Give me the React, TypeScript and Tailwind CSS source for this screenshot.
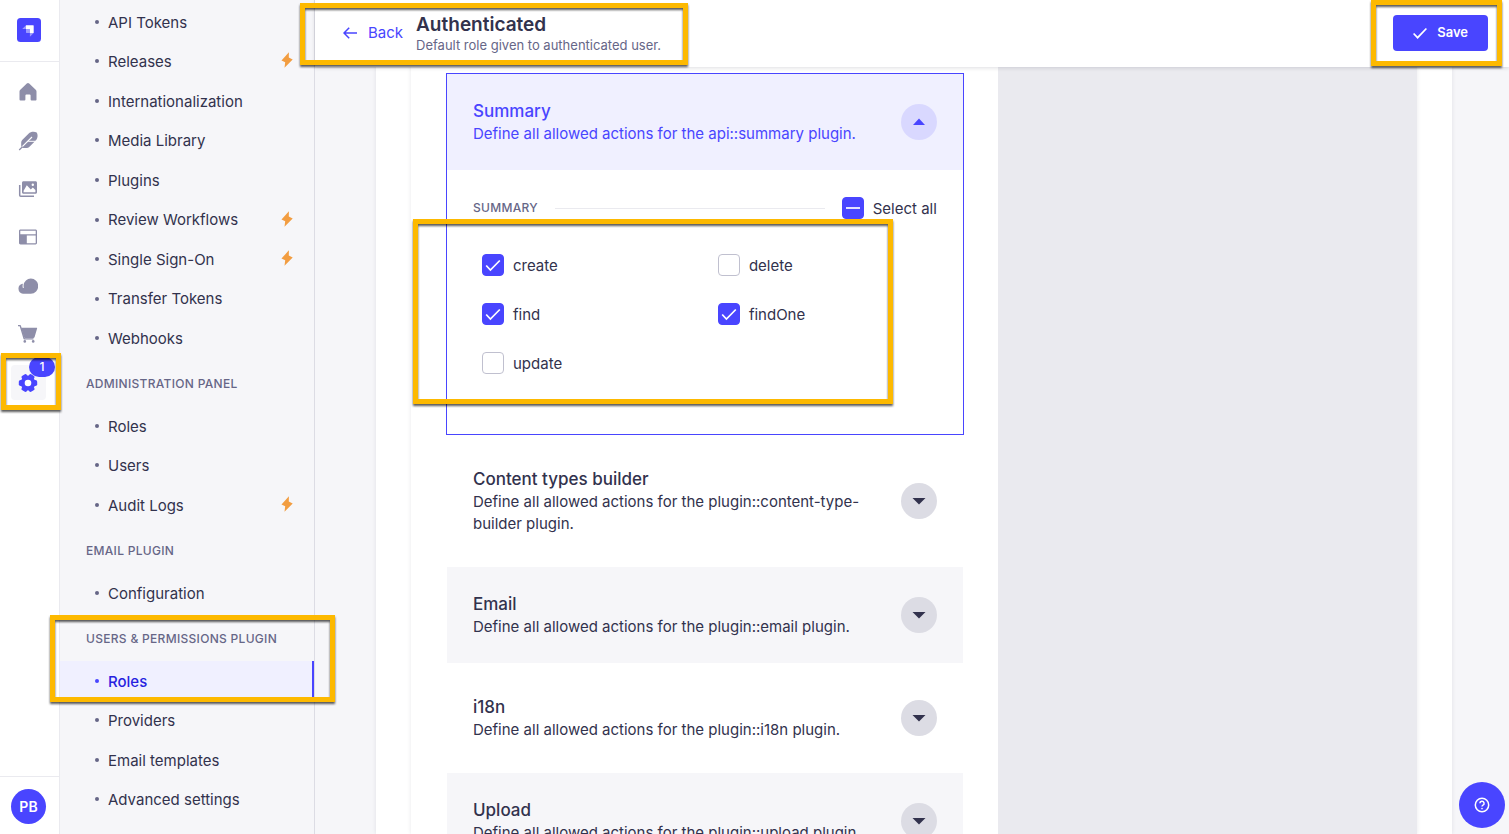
import React, { useState } from "react";

type NavEntry = { label: string; paid?: boolean; active?: boolean };

const globalLinks: NavEntry[] = [
  { label: "API Tokens" },
  { label: "Releases", paid: true },
  { label: "Internationalization" },
  { label: "Media Library" },
  { label: "Plugins" },
  { label: "Review Workflows", paid: true },
  { label: "Single Sign-On", paid: true },
  { label: "Transfer Tokens" },
  { label: "Webhooks" },
];
const adminLinks: NavEntry[] = [
  { label: "Roles" },
  { label: "Users" },
  { label: "Audit Logs", paid: true },
];
const emailLinks: NavEntry[] = [{ label: "Configuration" }];
const permissionLinks: NavEntry[] = [
  { label: "Roles", active: true },
  { label: "Providers" },
  { label: "Email templates" },
  { label: "Advanced settings" },
];

function Bolt() {
  return (
    <svg viewBox="0 0 12 16" className="mb-0.5 h-4 w-3" fill="#f29d41" aria-hidden="true">
      <path d="M7.9 0.2 0.5 8.6 4.2 10.2 3.5 15.8 11.7 7.4 7.8 5.6z" />
    </svg>
  );
}

function LinkList({ items, height }: { items: NavEntry[]; height: string }) {
  return (
    <ul className={`grid auto-rows-fr ${height}`}>
      {items.map((item) => (
        <li key={item.label} className="flex">
          <a
            href="#"
            aria-current={item.active ? "page" : undefined}
            className={
              item.active
                ? "flex flex-1 items-center border-r-2 border-[#4945ff] bg-[#f0f0ff] pr-[19px] pl-[35px] text-[15px] font-medium text-[#271fe0]"
                : "flex flex-1 items-center pr-[21px] pl-[35px] text-[15px] text-[#32324d]"
            }
          >
            <span
              className={
                item.active
                  ? "mr-[9px] size-1 rounded-full bg-[#4945ff]"
                  : "mr-[9px] size-1 rounded-full bg-[#666687]"
              }
            />
            <span className="flex-1 pt-0.5">{item.label}</span>
            {item.paid && <Bolt />}
          </a>
        </li>
      ))}
    </ul>
  );
}

function SectionTitle({ children }: { children: React.ReactNode }) {
  return (
    <h2 className="flex h-12 items-center pt-1 pl-[26px] text-xs font-medium tracking-wide text-[#666687] uppercase">
      {children}
    </h2>
  );
}

const railIcons: { label: string; drawing: React.ReactNode }[] = [
  {
    label: "Home",
    drawing: (
      <path d="M8.8 1.6a1.7 1.7 0 0 1 2.4 0l6.5 6.1c.5.5.8 1 .8 1.7v8.1c0 .6-.4 1-1 1h-3.9a1 1 0 0 1-1-1v-3.9a1 1 0 0 0-1-1H8.4a1 1 0 0 0-1 1v3.9a1 1 0 0 1-1 1H2.5a1 1 0 0 1-1-1V9.4c0-.7.3-1.2.8-1.7z" />
    ),
  },
  {
    label: "Content Manager",
    drawing: (
      <>
        <path d="M3.2 15.7v-4.2c0-1 .3-1.800 1-2.500L10.500 2.700c2.300-2.300 6-2.500 8.200-1.100 1.500 2.200 1.100 5.900-1.200 8.200l-6.300 6.200c-.7.7-1.500 1-2.500 1H4.500z" />
        <path d="M3.300 16.700 14 6" stroke="#fff" strokeWidth="1.100" fill="none" />
        <path d="M10.200 10.300h7.800" stroke="#fff" strokeWidth="1" fill="none" />
        <path d="M1.200 19 4.600 15.600" stroke="#8e8ea9" strokeWidth="1.300" fill="none" />
      </>
    ),
  },
  {
    label: "Media Library",
    drawing: (
      <>
        <path d="M1.7 6v10.200c0 .6.4 1 1 1h13.300" fill="none" stroke="#8e8ea9" strokeWidth="1.5" />
        <path
          fillRule="evenodd"
          d="M5.5 2.200h12c.9 0 1.500.6 1.500 1.500v9.600c0 .9-.6 1.500-1.500 1.500h-12c-.9 0-1.500-.6-1.500-1.500V3.700c0-.9.6-1.500 1.500-1.500zm9.300 2.300a1.200 1.200 0 1 0 0 2.400 1.200 1.200 0 0 0 0-2.400zM5.600 11.700v1.500h11.800v-2.100l-2.600-2.600-2 2-4-4.300z"
        />
      </>
    ),
  },
  {
    label: "Content-Type Builder",
    drawing: (
      <path
        fillRule="evenodd"
        d="M2.5 2.500h15c.8 0 1.500.6 1.500 1.400v12.200c0 .8-.7 1.400-1.500 1.400h-15c-.8 0-1.500-.6-1.500-1.400V3.900c0-.8.7-1.400 1.500-1.400zM2.300 3.800v3.400h15.400V3.800zM8.800 8.500v7.700h8.900V8.500z"
      />
    ),
  },
  {
    label: "Cloud",
    drawing: (
      <path d="M12.8 2.500a7.300 7.300 0 0 0-7.200 6.600c-.1 1.200 0 1.800.2 2.500.1.400-.8.700-1 .2-.3-1.200-.3-2.200 0-3.400.1-.4-.1-.7-.5-.6A5.100 5.100 0 0 0 5 17.800h7.800a7.600 7.600 0 0 0 7.400-7.700 7.500 7.500 0 0 0-7.400-7.600z" />
    ),
  },
  {
    label: "Marketplace",
    drawing: (
      <>
        <path d="M0 1.600h2.200l4 13.300h9.300" fill="none" stroke="#8e8ea9" strokeWidth="1.4" strokeLinejoin="round" />
        <path d="M3 3.700h15.500c.5 0 .8.400.6.900L16.600 13c-.2.600-.7 1-1.300 1H7.200c-.6 0-1.100-.4-1.300-1z" />
        <circle cx="6.8" cy="17.4" r="1.3" />
        <circle cx="15.2" cy="17.4" r="1.3" />
      </>
    ),
  },
];

function IconRail() {
  return (
    <nav aria-label="Main" className="flex w-[60px] shrink-0 flex-col border-r border-[#eaeaef] bg-white">
      <div className="flex h-[62px] shrink-0 items-center border-b border-[#eaeaef] pb-0.5 pl-[17px]">
        <svg viewBox="0 0 24 24" className="size-6" role="img" aria-label="Strapi">
          <rect width="24" height="24" rx="3.5" fill="#4945ff" />
          <path d="M9 7.300h7.200c.3 0 .5.200.5.500V15h-3.800v-3.400c0-.3-.2-.5-.5-.5H9z" fill="#fff" />
          <path d="M9 7.300v3.800H5.200zM12.900 15h3.800l-3.800 3.800z" fill="#fff" opacity=".45" />
          <path d="M9 11.100h3.400c.3 0 .5.200.5.500V15H9.500c-.3 0-.5-.2-.5-.5z" fill="#fff" opacity=".45" />
        </svg>
      </div>
      <ul className="flex h-[339px] shrink-0 flex-col">
        {railIcons.map((icon) => (
          <li key={icon.label} className="flex flex-1 items-center justify-center pt-3 pr-1">
            <a href="#" aria-label={icon.label}>
              <svg viewBox="0 0 20 20" className="size-5" fill="#8e8ea9" aria-hidden="true">
                {icon.drawing}
              </svg>
            </a>
          </li>
        ))}
        <li className="flex flex-1 items-center justify-center pt-3 pr-0.5">
          <a
            href="#"
            aria-label="Settings"
            className="relative flex size-[35px] items-center justify-center rounded bg-[#f6f6f9] pr-0.5"
          >
            <svg viewBox="0 0 20 20" className="size-5" aria-hidden="true">
              <g fill="#4945ff">
                <circle cx="10" cy="10" r="7.4" />
                <rect x="7" y="0.8" width="6" height="18.4" rx="1.8" transform="rotate(30 10 10)" />
                <rect x="7" y="0.8" width="6" height="18.4" rx="1.8" transform="rotate(90 10 10)" />
                <rect x="7" y="0.8" width="6" height="18.4" rx="1.8" transform="rotate(150 10 10)" />
              </g>
              <circle cx="10" cy="10" r="3.3" fill="#fff" />
            </svg>
            <span className="absolute -top-2 left-[18px] flex h-5 w-[26px] items-center justify-center rounded-full bg-[#4945ff] text-xs font-medium text-white">
              1
            </span>
          </a>
        </li>
      </ul>
      <div className="mt-auto flex h-[58px] shrink-0 items-center border-t border-[#eaeaef] pt-0.5 pl-[11px]">
        <button className="flex size-[35px] items-center justify-center rounded-full bg-[#4945ff] text-sm font-semibold text-white">
          PB
        </button>
      </div>
    </nav>
  );
}

function Permission({
  label,
  initial = false,
  partial = false,
}: {
  label: string;
  initial?: boolean;
  partial?: boolean;
}) {
  const [checked, setChecked] = useState(initial);
  return (
    <label className="flex items-center gap-[9px] text-[15px] leading-5 text-[#32324d]">
      <span className="grid">
        <input
          type="checkbox"
          checked={checked}
          onChange={() => setChecked(!checked)}
          className="col-start-1 row-start-1 size-[22px] appearance-none rounded border border-[#c0c0cf] bg-white checked:border-[#4945ff] checked:bg-[#4945ff]"
        />
        {checked && (
          <svg
            viewBox="0 0 22 22"
            className="pointer-events-none col-start-1 row-start-1 size-[22px]"
            fill="none"
            stroke="#fff"
            strokeWidth="1.7"
            aria-hidden="true"
          >
            {partial ? <path d="M4 11h14" /> : <path d="m4.2 11.500 4.200 4.500L17.800 6.500" />}
          </svg>
        )}
      </span>
      <span className="pt-0.5">{label}</span>
    </label>
  );
}

function AccordionHeader({
  title,
  text,
  open = false,
  shaded = false,
}: {
  title: string;
  text: string;
  open?: boolean;
  shaded?: boolean;
}) {
  const tone = open
    ? "bg-[#f0f0ff] text-[#4945ff]"
    : shaded
      ? "mx-px bg-[#f6f6f9] text-[#32324d]"
      : "mx-px bg-white text-[#32324d]";
  return (
    <div className={`flex items-center justify-between px-[26px] py-[25px] ${tone}`}>
      <div className="max-w-[400px]">
        <h3 className="text-[17px] leading-6 font-medium">{title}</h3>
        <p className="text-[15px] leading-[22px]">{text}</p>
      </div>
      <button
        aria-label={`Toggle ${title}`}
        aria-expanded={open}
        className={
          open
            ? "flex size-9 shrink-0 items-center justify-center rounded-full bg-[#d9d8ff]"
            : "flex size-9 shrink-0 items-center justify-center rounded-full bg-[#dcdce4]"
        }
      >
        <svg viewBox="0 0 14 8" className="h-2 w-3.5" aria-hidden="true">
          {open ? <path d="M7 0.5 13 7H1z" fill="#4945ff" /> : <path d="M7 7.500 0.500 1h13z" fill="#32324d" />}
        </svg>
      </button>
    </div>
  );
}

function Highlight({ place }: { place: string }) {
  return (
    <div
      aria-hidden="true"
      className={`pointer-events-none absolute z-20 border-[5px] border-[#fdb900] drop-shadow-[0_2px_1px_rgba(0,0,0,0.65)] ${place}`}
    />
  );
}

export default function App() {
  return (
    <div className="relative flex h-screen overflow-hidden bg-[#f6f6f9] font-[Inter,sans-serif] text-[#32324d]">
      <IconRail />

      <nav aria-label="Settings" className="w-[255px] shrink-0 overflow-hidden border-r border-[#dcdce4] pt-0.5">
        <LinkList items={globalLinks} height="h-[356px]" />
        <SectionTitle>Administration panel</SectionTitle>
        <LinkList items={adminLinks} height="h-[119px]" />
        <SectionTitle>Email plugin</SectionTitle>
        <LinkList items={emailLinks} height="h-10" />
        <SectionTitle>Users &amp; permissions plugin</SectionTitle>
        <LinkList items={permissionLinks} height="h-[158px]" />
      </nav>

      <div className="flex min-w-0 flex-1 flex-col">
        <header className="z-10 flex h-[67px] shrink-0 items-center justify-between bg-white pr-5 pb-0.5 pl-7 shadow-[0_1px_4px_rgba(33,33,52,0.15)]">
          <div className="flex items-center gap-[13px]">
            <a href="#" className="flex items-center gap-[11px] text-[15px] text-[#4945ff]">
              <svg viewBox="0 0 14 12" className="h-3 w-3.5" fill="none" stroke="#4945ff" strokeWidth="1.5" aria-hidden="true">
                <path d="M14 6H1M6.2 0.700 1 6l5.200 5.300" />
              </svg>
              <span className="pt-0.5">Back</span>
            </a>
            <div>
              <h1 className="text-[19px] leading-6 font-semibold">Authenticated</h1>
              <p className="text-[13px] leading-4 text-[#666687]">Default role given to authenticated user.</p>
            </div>
          </div>
          <button className="mr-px flex h-9 items-center gap-2.5 rounded bg-[#4945ff] px-5 text-[13px] font-semibold text-white">
            <svg viewBox="0 0 14 12" className="h-3 w-3.5" fill="none" stroke="#fff" strokeWidth="1.7" aria-hidden="true">
              <path d="m0.6 6.500 4 4.200L13.400 1.500" />
            </svg>
            Save
          </button>
        </header>

        <main className="flex min-h-0 flex-1 overflow-hidden pr-[57px] pl-[61px]">
          <div className="flex flex-1 bg-white px-[35px] shadow-[0_0_4px_rgba(33,33,52,0.1)]">
            <div className="grid flex-1 grid-cols-12 shadow-[0_0_4px_rgba(33,33,52,0.1)]">
              <div className="col-span-7 flex flex-col gap-[7px] pt-1.5 pr-[34px] pl-[35px]">
                <section className="shrink-0 border border-[#4945ff]">
                  <AccordionHeader open title="Summary" text="Define all allowed actions for the api::summary plugin." />
                  <div className="px-[26px] pt-[27px] pb-[60px]">
                    <div className="flex items-center">
                      <h4 className="text-xs font-medium tracking-wide text-[#666687]">SUMMARY</h4>
                      <hr className="mx-[17px] flex-1 border-[#eaeaef]" />
                      <Permission label="Select all" initial partial />
                    </div>
                    <div className="grid grid-cols-2 gap-x-[26px] gap-y-[27px] px-[9px] pt-[35px]">
                      <Permission label="create" initial />
                      <Permission label="delete" />
                      <Permission label="find" initial />
                      <Permission label="findOne" initial />
                      <Permission label="update" />
                    </div>
                  </div>
                </section>
                <AccordionHeader
                  title="Content types builder"
                  text="Define all allowed actions for the plugin::content-type-builder plugin."
                />
                <AccordionHeader shaded title="Email" text="Define all allowed actions for the plugin::email plugin." />
                <AccordionHeader title="i18n" text="Define all allowed actions for the plugin::i18n plugin." />
                <AccordionHeader shaded title="Upload" text="Define all allowed actions for the plugin::upload plugin." />
              </div>
              <aside className="col-span-5 bg-[#eaeaef]" />
            </div>
          </div>
        </main>
      </div>

      <button
        aria-label="Help"
        className="absolute right-1 bottom-1.5 z-10 flex size-[46px] items-center justify-center rounded-full bg-[#4945ff]"
      >
        <svg viewBox="0 0 16 16" className="size-4" fill="none" stroke="#fff" strokeWidth="1.5" aria-hidden="true">
          <circle cx="8" cy="8" r="6.7" />
          <path d="M5.9 6.300a2.100 2.100 0 1 1 3.100 1.900c-.7.4-1 .7-1 1.400" />
          <circle cx="8" cy="11.6" r=".6" fill="#fff" strokeWidth=".5" />
        </svg>
      </button>

      <Highlight place="left-[300px] top-[3px] h-[62px] w-[388px]" />
      <Highlight place="right-[7px] top-0 h-[66px] w-[131px]" />
      <Highlight place="left-px top-[353px] h-[57px] w-[60px]" />
      <Highlight place="left-[50px] top-[615px] h-[87px] w-[285px]" />
      <Highlight place="left-[413px] top-[219px] h-[185px] w-[480px]" />
    </div>
  );
}
